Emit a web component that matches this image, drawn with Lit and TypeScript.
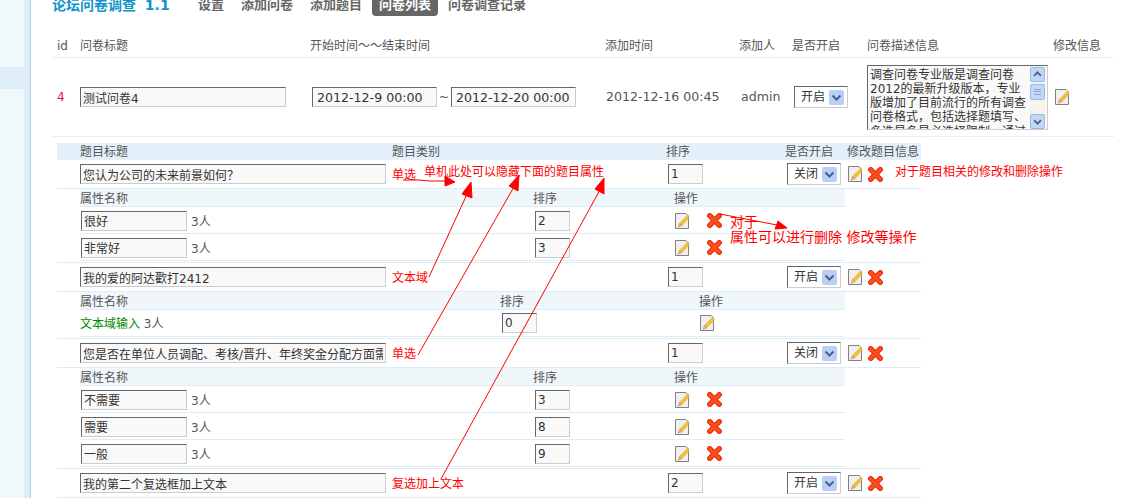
import { LitElement, html, css, svg } from "lit";
import { customElement } from "lit/decorators.js";

const editIcon = html`<svg class="ico" width="15" height="16" viewBox="0 0 15 16">
  <path d="M.5.5H11L13.5 3V15.5H.5z" fill="#f0f0f0" stroke="#808080"/>
  <path d="M12.2 2.5L14.5 4.6L7 12.6L4.4 10.6z" fill="#f4c22e" stroke="#dca41c" stroke-width=".5"/>
  <path d="M4.4 10.6L7 12.6L3.2 14.2z" fill="#ecc09a" stroke="#b8703a" stroke-width=".5"/>
</svg>`;

const delIcon = html`<svg class="ico" width="15" height="15" viewBox="0 0 15 15">
  <path d="M2.7 2.7L12.3 12.3M12.3 2.7L2.7 12.3" stroke="#de2400" stroke-width="5.2" stroke-linecap="round"/>
  <path d="M2.7 2.7L12.3 12.3M12.3 2.7L2.7 12.3" stroke="#ff4c1c" stroke-width="3.6" stroke-linecap="round"/>
</svg>`;

const chevron = (d: string) => svg`<path d=${d} fill="none" stroke="#4d6185" stroke-width="2"/>`;

type Opt = { name: string; order: string };
type Q = {
  title: string; type: string; order: string; state: string;
  opts?: Opt[]; textOpt?: boolean; note?: string;
};

const questions: Q[] = [
  { title: "您认为公司的未来前景如何？", type: "单选", order: "1", state: "关闭", note: "对于题目相关的修改和删除操作",
    opts: [{ name: "很好", order: "2" }, { name: "非常好", order: "3" }] },
  { title: "我的爱的阿达歡打2412", type: "文本域", order: "1", state: "开启", textOpt: true },
  { title: "您是否在单位人员调配、考核/晋升、年终奖金分配方面需要帮助", type: "单选", order: "1", state: "关闭",
    opts: [{ name: "不需要", order: "3" }, { name: "需要", order: "8" }, { name: "一般", order: "9" }] },
  { title: "我的第二个复选框加上文本", type: "复选加上文本", order: "2", state: "开启" },
];

@customElement("app-root")
export class AppRoot extends LitElement {
  static styles = css`
    :host { display: block; width: 1131px; height: 498px; overflow: hidden; position: relative;
      font: 12px/18px "DejaVu Sans", "Noto Sans CJK SC", sans-serif; color: #555; background: #fff; }
    * { box-sizing: border-box; }
    .page { display: flex; height: 498px; }
    .side { width: 24px; background: #f1f8fc; padding-top: 67px; flex: none; }
    .band { height: 22px; background: #deeef8; }
    .rail { width: 7px; background: #deeef8; border-right: 1px solid #aecde2; flex: none; }
    .main { flex: none; width: 1083px; padding-left: 21px; }

    .top { display: flex; height: 22px; margin-top: -6px; align-items: center; }
    .title { width: 139px; font-size: 14px; font-weight: bold; color: #0d94cb; white-space: pre; word-spacing: 4px; }
    .nav { display: flex; gap: 3px; }
    .nav span { font-size: 13px; font-weight: bold; color: #666; padding: 0 7px; height: 22px; line-height: 22px; }
    .nav .on { background: #666; color: #fff; border-radius: 0 0 4px 4px; }

    .inp { display: block; height: 20px; border: 1px solid; border-color: #666 #ccc #ccc #666; background: #f9f9f9;
      font: 12px "DejaVu Sans", "Noto Sans CJK SC", sans-serif; color: #333; padding: 0 2px; outline: none; margin: 0; }
    .time { font-size: 12.6px; }
    .ico { display: block; flex: none; }

    .cols { display: grid; grid-template-columns: 23px 230px 295px 134px 53px 75px 186px 1fr; padding-left: 5px; width: 1062px; }
    .thead { margin-top: 20px; height: 22px; padding-top: 1px; border-bottom: 1px solid #e4eff7; align-items: start; }
    .row1 { height: 79px; border-bottom: 1px solid #e4eff7; align-items: center; }
    .id { color: #e0103a; }
    .t206 { width: 206px; }
    .dates { display: flex; align-items: center; padding-left: 2px; }
    .dates .inp { width: 125px; padding-left: 4px; }
    .dates i { font-style: normal; width: 14px; text-align: center; }
    .pad1 { padding-left: 1px; }
    .pad2 { padding-left: 2px; }
    .sel { display: flex; align-items: center; justify-content: space-between; width: 54px; height: 22px;
      border: 1px solid; border-color: #666 #ccc #ccc #666; background: #fff; color: #333; padding: 0 3px 0 6px; }
    .btn { width: 15px; height: 15px; background: #b9cffa; border-radius: 2px; display: block; }
    .area { display: flex; width: 181px; height: 65px; border: 1px solid; border-color: #666 #ccc #ccc #666; background: #f9f9f9; overflow: hidden; }
    .atext { flex: 1; padding: 2px 0 0 2px; font-size: 12px; line-height: 14.3px; color: #333; white-space: nowrap; overflow: hidden; }
    .bar { width: 15px; margin-right: 2px; display: flex; flex-direction: column; padding-top: 1px; background: #f5f5ec; }
    .sb { width: 15px; height: 15px; background: #c3d6f6; border: 1px solid #9ab8e8; border-radius: 2px; display: block; flex: none; }
    .thumb { height: 16px; margin-top: 2px; display: flex; flex-direction: column; gap: 2px; padding: 4px 3px; }
    .thumb b { height: 1px; background: #8aa6d4; display: block; }
    .sp { flex: 1; }

    .sub { width: 864px; margin-left: 5px; }
    .qcols { display: grid; grid-template-columns: 23px 312px 274px 119px 62px 1fr; }
    .qhead { margin-top: 6px; height: 17px; line-height: 19px; background: #e3f0fa; }
    .q { padding: 4px 0; grid-template-rows: 20px; align-items: center; }
    .qwrap { border-bottom: 1px solid #deeef8; }
    .qtop { border-top: 1px solid #deeef8; }
    .qt { width: 306px; }
    .red { color: #f00; padding-top: 2px; }
    .green { color: #080; }
    .ord { width: 35px; }
    .qord { padding-left: 2px; }
    .qsel { padding-left: 2px; }
    .acts { display: flex; align-items: center; gap: 5px; padding-left: 1px; position: relative; }
    .qnote { color: #f00; white-space: nowrap; margin-left: 7px; margin-top: -5px; font-size: 12px; }
    .ops { width: 765px; margin-left: 23px; margin-bottom: 1px; }
    .ocols { display: grid; grid-template-columns: 453px 141px 1fr; }
    .tcols { display: grid; grid-template-columns: 420px 199px 1fr; }
    .ohead { height: 18px; line-height: 21px; background: #f0f7fb; border-bottom: 1px solid #deeef8; }
    .orow { height: 27px; padding: 3px 0; border-bottom: 1px solid #deeef8; align-items: center; }
    .oname { display: flex; align-items: center; gap: 4px; padding-left: 1px; }
    .oname .inp { width: 106px; }
    .oname span { padding-top: 3px; }
    .ttext { padding-top: 2px; }
    .oord { padding-left: 2px; }
    .oact { display: flex; align-items: center; gap: 17px; padding-left: 1px; }
    .tact { padding-left: 1px; }

    .over { position: absolute; left: 0; top: 0; pointer-events: none; }
    .note { position: absolute; color: #f00; white-space: nowrap; }
    .n1 { left: 424px; top: 163px; }
    .n2 { left: 730px; top: 213px; font-size: 14px; }
    .n3 { left: 730px; top: 228px; font-size: 14px; }
  `;

  private sel(v: string) {
    return html`<div class="sel">${v}<svg class="btn" viewBox="0 0 15 15">${chevron("M3.5 5.5L7.5 9.5L11.5 5.5")}</svg></div>`;
  }

  private q(q: Q, i: number) {
    return html`
      <div class="qwrap ${i > 0 ? "qtop" : ""} qcols q">
        <span></span>
        <input class="inp qt" .value=${q.title} />
        <span class="red">${q.type}</span>
        <div class="qord"><input class="inp ord" .value=${q.order} /></div>
        <div class="qsel">${this.sel(q.state)}</div>
        <div class="acts">${editIcon}${delIcon}${q.note ? html`<span class="qnote">${q.note}</span>` : ""}</div>
      </div>
      ${q.opts ? html`<div class="ops">
        <div class="ocols ohead"><span>属性名称</span><span>排序</span><span>操作</span></div>
        ${q.opts.map(o => html`<div class="ocols orow">
          <div class="oname"><input class="inp" .value=${o.name} /><span>3人</span></div>
          <div class="oord"><input class="inp ord" .value=${o.order} /></div>
          <div class="oact">${editIcon}${delIcon}</div>
        </div>`)}
      </div>` : ""}
      ${q.textOpt ? html`<div class="ops">
        <div class="tcols ohead"><span>属性名称</span><span>排序</span><span>操作</span></div>
        <div class="tcols orow">
          <div class="ttext"><span class="green">文本域输入</span> 3人</div>
          <div class="oord"><input class="inp ord" .value=${"0"} /></div>
          <div class="tact">${editIcon}</div>
        </div>
      </div>` : ""}`;
  }

  render() {
    return html`
    <div class="page">
      <div class="side"><div class="band"></div></div>
      <div class="rail"></div>
      <div class="main">
        <div class="top">
          <div class="title">论坛问卷调查 1.1</div>
          <div class="nav"><span>设置</span><span>添加问卷</span><span>添加题目</span><span class="on">问卷列表</span><span>问卷调查记录</span></div>
        </div>
        <div class="cols thead">
          <span>id</span><span>问卷标题</span><span>开始时间～～结束时间</span><span>添加时间</span><span>添加人</span><span>是否开启</span><span>问卷描述信息</span><span>修改信息</span>
        </div>
        <div class="cols row1">
          <span class="id">4</span>
          <input class="inp t206" .value=${"测试问卷4"} />
          <div class="dates"><input class="inp time" .value=${"2012-12-9 00:00"} /><i>~</i><input class="inp time" .value=${"2012-12-20 00:00"} /></div>
          <span class="pad1 time">2012-12-16 00:45</span>
          <span class="pad2 time">admin</span>
          <div class="pad2">${this.sel("开启")}</div>
          <div class="area">
            <div class="atext">调查问卷专业版是调查问卷<br />2012的最新升级版本，专业<br />版增加了目前流行的所有调查<br />问卷格式，包括选择题填写、<br />多选是多是必选择限制，通过</div>
            <div class="bar">
              <svg class="sb" viewBox="0 0 15 15">${chevron("M3.5 9L7.5 5L11.5 9")}</svg>
              <div class="sb thumb"><b></b><b></b><b></b></div>
              <div class="sp"></div>
              <svg class="sb" viewBox="0 0 15 15">${chevron("M3.5 6L7.5 10L11.5 6")}</svg>
            </div>
          </div>
          <div class="pad2">${editIcon}</div>
        </div>
        <div class="sub">
          <div class="qcols qhead"><span></span><span>题目标题</span><span>题目类别</span><span>排序</span><span>是否开启</span><span>修改题目信息</span></div>
          ${questions.map((q, i) => this.q(q, i))}
        </div>
      </div>
    </div>
    <span class="note n1">单机此处可以隐藏下面的题目属性</span>
    <span class="note n2">对于</span>
    <span class="note n3">属性可以进行删除 修改等操作</span>
    <svg class="over" width="1131" height="498" viewBox="0 0 1131 498" fill="none" stroke="#f00">
      <path d="M403 180H419L429 181H446"/>
      <path d="M445 176L455 182L445 186z" fill="#f00"/>
      <path d="M429 277L468 192"/>
      <path d="M471 182L472 198L462 194z" fill="#f00"/>
      <path d="M418 355L515 185"/>
      <path d="M519 175L518 191L509 186z" fill="#f00"/>
      <path d="M441 479L601 188"/>
      <path d="M604 178L604 194L595 189z" fill="#f00"/>
      <path d="M720 214L777 225"/>
      <path d="M787 228L775 229L778 221z" fill="#f00"/>
    </svg>`;
  }
}
